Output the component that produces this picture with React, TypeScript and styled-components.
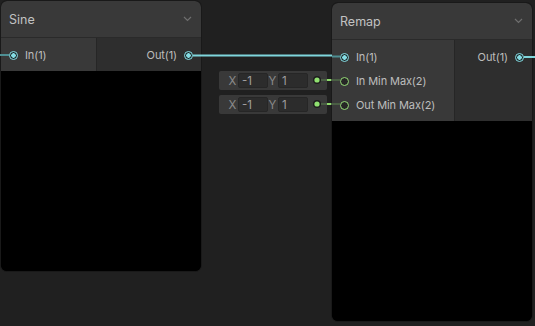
import styled, { createGlobalStyle } from "styled-components";

const GlobalStyle = createGlobalStyle`
  html, body {
    margin: 0;
    padding: 0;
    background: #202020;
  }
  body {
    font-family: Inter, "Noto Sans", "Liberation Sans", sans-serif;
  }
`;

const Canvas = styled.div`
  position: relative;
  width: 535px;
  height: 326px;
  overflow: hidden;
  background: #202020;
`;

const Node = styled.div<{ $x: number; $y: number; $h: number }>`
  position: absolute;
  left: ${(p) => p.$x}px;
  top: ${(p) => p.$y}px;
  width: 200px;
  height: ${(p) => p.$h}px;
  display: flex;
  flex-direction: column;
  border-radius: 6px;
  overflow: hidden;
  background: #000;
  box-shadow: 0 0 0 1px #191919;
`;

const Header = styled.div`
  height: 37px;
  flex: none;
  display: flex;
  align-items: center;
  justify-content: space-between;
  padding: 0 9px 0 8px;
  background: #393939;
  border-bottom: 1px solid #2a2a2a;
  box-sizing: border-box;
  color: #c2c2c2;
  font-size: 12.5px;
`;

const Chevron = styled.svg`
  width: 9px;
  height: 6px;
  color: #6e6e6e;
`;

const Ports = styled.div`
  display: flex;
  flex: none;
`;

const Column = styled.div<{ $w?: number; $side: "in" | "out" }>`
  display: flex;
  flex-direction: column;
  padding: 5px 0 4px;
  ${(p) => (p.$w ? `width: ${p.$w}px; flex: none;` : "flex: 1;")}
  background: ${(p) => (p.$side === "in" ? "#393939" : "#2e2e2e")};
  border-right: ${(p) => (p.$side === "in" ? "1px solid #262626" : "none")};
  align-items: ${(p) => (p.$side === "in" ? "flex-start" : "flex-end")};
`;

const PortRow = styled.div<{ $side: "in" | "out" }>`
  height: 24px;
  display: flex;
  align-items: center;
  gap: 7px;
  flex-direction: ${(p) => (p.$side === "in" ? "row" : "row-reverse")};
  padding: ${(p) => (p.$side === "in" ? "0 0 0 8px" : "0 8px 0 0")};
  color: #bdbdbd;
  font-size: 11px;
  letter-spacing: -0.1px;
  white-space: nowrap;
`;

const Port = styled.span<{ $kind: "vec1" | "vec2" }>`
  width: 9px;
  height: 9px;
  flex: none;
  box-sizing: border-box;
  border-radius: 50%;
  border: 1.5px solid ${(p) => (p.$kind === "vec1" ? "#84dce3" : "#96dc78")};
  background: ${(p) =>
    p.$kind === "vec1"
      ? "radial-gradient(circle, #84dce3 0 2px, #1f2a2b 2.5px)"
      : "#262626"};
`;

const Preview = styled.div`
  flex: 1;
  background: #000;
`;

const InlineInput = styled.div<{ $x: number; $y: number }>`
  position: absolute;
  left: ${(p) => p.$x}px;
  top: ${(p) => p.$y}px;
  width: 108px;
  height: 19px;
  box-sizing: border-box;
  display: flex;
  align-items: center;
  padding: 0 0 0 9px;
  background: #393939;
  border-radius: 2px;
  font-size: 11.5px;
  color: #8a8a8a;
`;

const AxisLabel = styled.span`
  width: 9px;
  text-align: center;
`;

const Field = styled.span`
  width: 30px;
  height: 15px;
  box-sizing: border-box;
  padding-left: 3px;
  line-height: 14px;
  margin-left: 1px;
  background: #2c2c2c;
  border: 1px solid #262626;
  border-radius: 2px;
  color: #a0a0a0;
`;

const Wires = styled.svg`
  position: absolute;
  left: 0;
  top: 0;
  pointer-events: none;
`;

type PortDef = { name: string; kind: "vec1" | "vec2" };

function GraphNode(props: {
  title: string;
  x: number;
  y: number;
  h: number;
  inW: number;
  inputs: PortDef[];
  outputs: PortDef[];
}) {
  return (
    <Node $x={props.x} $y={props.y} $h={props.h}>
      <Header>
        <span>{props.title}</span>
        <Chevron viewBox="0 0 9 6">
          <path d="M1 1l3.5 3.5L8 1" fill="none" stroke="currentColor" strokeWidth="1.2" />
        </Chevron>
      </Header>
      <Ports>
        <Column $side="in" $w={props.inW}>
          {props.inputs.map((p) => (
            <PortRow key={p.name} $side="in">
              <Port $kind={p.kind} />
              {p.name}
            </PortRow>
          ))}
        </Column>
        <Column $side="out">
          {props.outputs.map((p) => (
            <PortRow key={p.name} $side="out">
              <Port $kind={p.kind} />
              {p.name}
            </PortRow>
          ))}
        </Column>
      </Ports>
      <Preview />
    </Node>
  );
}

function Vec2Input({ x, y }: { x: number; y: number }) {
  return (
    <InlineInput $x={x} $y={y}>
      <AxisLabel>X</AxisLabel>
      <Field>-1</Field>
      <AxisLabel>Y</AxisLabel>
      <Field>1</Field>
    </InlineInput>
  );
}

export default function App() {
  return (
    <Canvas>
      <GlobalStyle />
      <GraphNode
        title="Sine"
        x={1}
        y={1}
        h={270}
        inW={95}
        inputs={[{ name: "In(1)", kind: "vec1" }]}
        outputs={[{ name: "Out(1)", kind: "vec1" }]}
      />
      <GraphNode
        title="Remap"
        x={332}
        y={3}
        h={318}
        inW={122}
        inputs={[
          { name: "In(1)", kind: "vec1" },
          { name: "In Min Max(2)", kind: "vec2" },
          { name: "Out Min Max(2)", kind: "vec2" },
        ]}
        outputs={[{ name: "Out(1)", kind: "vec1" }]}
      />
      <Vec2Input x={219} y={71} />
      <Vec2Input x={219} y={95} />
      <Wires width="535" height="326" viewBox="0 0 535 326">
        <line x1="0" y1="55" x2="9" y2="55" stroke="#4e8f93" strokeWidth="2" />
        <line x1="193" y1="55.5" x2="332" y2="55.5" stroke="#7fd6dc" strokeWidth="2" />
        <line x1="332" y1="56.5" x2="340" y2="56.5" stroke="#4e8f93" strokeWidth="2" />
        <line x1="524" y1="57" x2="535" y2="57" stroke="#7fd6dc" strokeWidth="2" />
        {[80, 104].map((y) => (
          <g key={y}>
            <line x1="320" y1={y} x2="340" y2={y} stroke="#4a5e44" strokeWidth="2" />
            <line x1="327" y1={y} x2="331" y2={y} stroke="#8fdc6c" strokeWidth="2" />
            <circle cx="317" cy={y} r="4" fill="#1d1d1d" />
            <circle cx="317" cy={y} r="2.6" fill="#90e070" />
          </g>
        ))}
      </Wires>
    </Canvas>
  );
}
